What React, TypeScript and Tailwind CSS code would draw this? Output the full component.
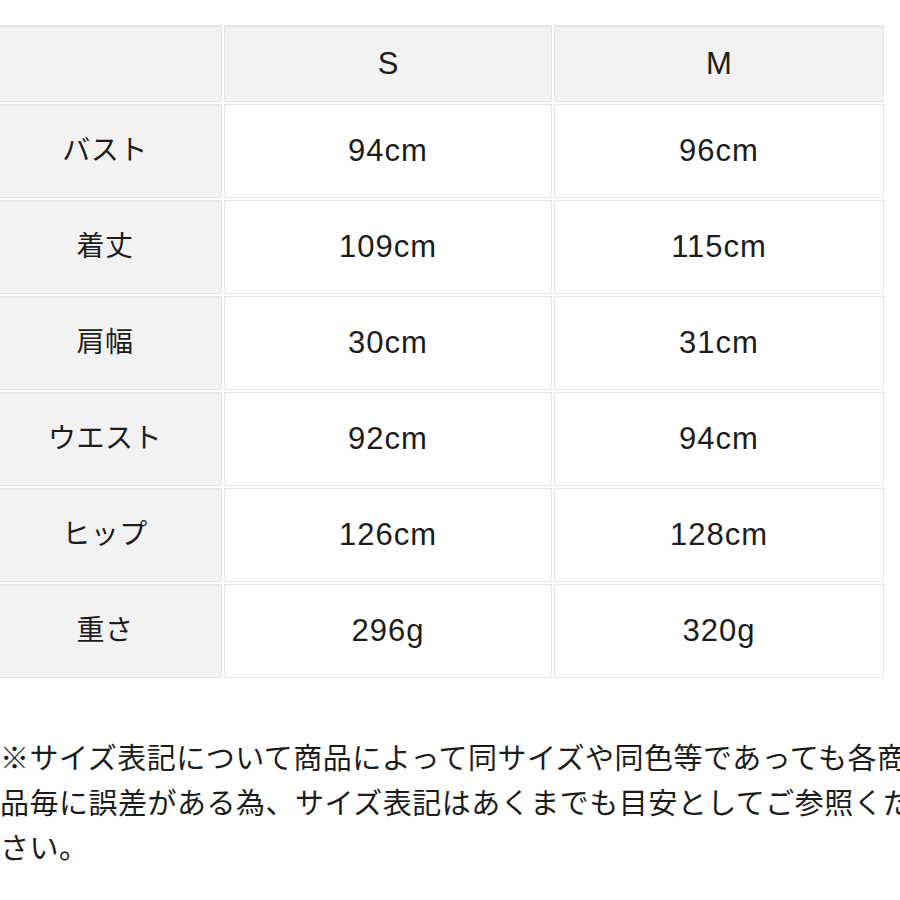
const rows: [string, string, string][] = [
  ["バスト", "94cm", "96cm"],
  ["着丈", "109cm", "115cm"],
  ["肩幅", "30cm", "31cm"],
  ["ウエスト", "92cm", "94cm"],
  ["ヒップ", "126cm", "128cm"],
  ["重さ", "296g", "320g"],
];

const font = { fontFamily: '"Liberation Sans", "Noto Sans CJK JP", sans-serif' };

export default function App() {
  return (
    <div className="w-[900px] h-[900px] overflow-hidden bg-white text-[#1c1c1c]" style={font}>
      {/* size table */}
      <div className="pt-[25px] ml-[-12px]">
        <div className="grid grid-cols-[234px_328px_330px] gap-[2px]">
          <div className="h-[77px] bg-[#f2f2f2] border border-[#e3e3e3] border-t-2" />
          <div className="h-[77px] bg-[#f2f2f2] border border-[#e3e3e3] border-t-2 flex items-center justify-center text-[31px]">
            S
          </div>
          <div className="h-[77px] bg-[#f2f2f2] border border-[#e3e3e3] border-t-2 flex items-center justify-center text-[31px]">
            M
          </div>
          {rows.map(([label, s, m]) => (
            <div key={label} className="contents">
              <div className="h-[94px] bg-[#f2f2f2] border border-[#e3e3e3] flex items-center justify-center text-[28px] tracking-[0.5px]">
                {label}
              </div>
              <div className="h-[94px] bg-white border border-[#e3e3e3] flex items-center justify-center text-[31px] tracking-[1px]">
                {s}
              </div>
              <div className="h-[94px] bg-white border border-[#e3e3e3] flex items-center justify-center text-[31px] tracking-[1px]">
                {m}
              </div>
            </div>
          ))}
        </div>
      </div>

      {/* note */}
      <p className="mt-[59px] w-[925px] text-[29px] leading-[45px] tracking-[0.5px]">
        ※サイズ表記について商品によって同サイズや同色等であっても各商品毎に誤差がある為、サイズ表記はあくまでも目安としてご参照ください。
      </p>
    </div>
  );
}
